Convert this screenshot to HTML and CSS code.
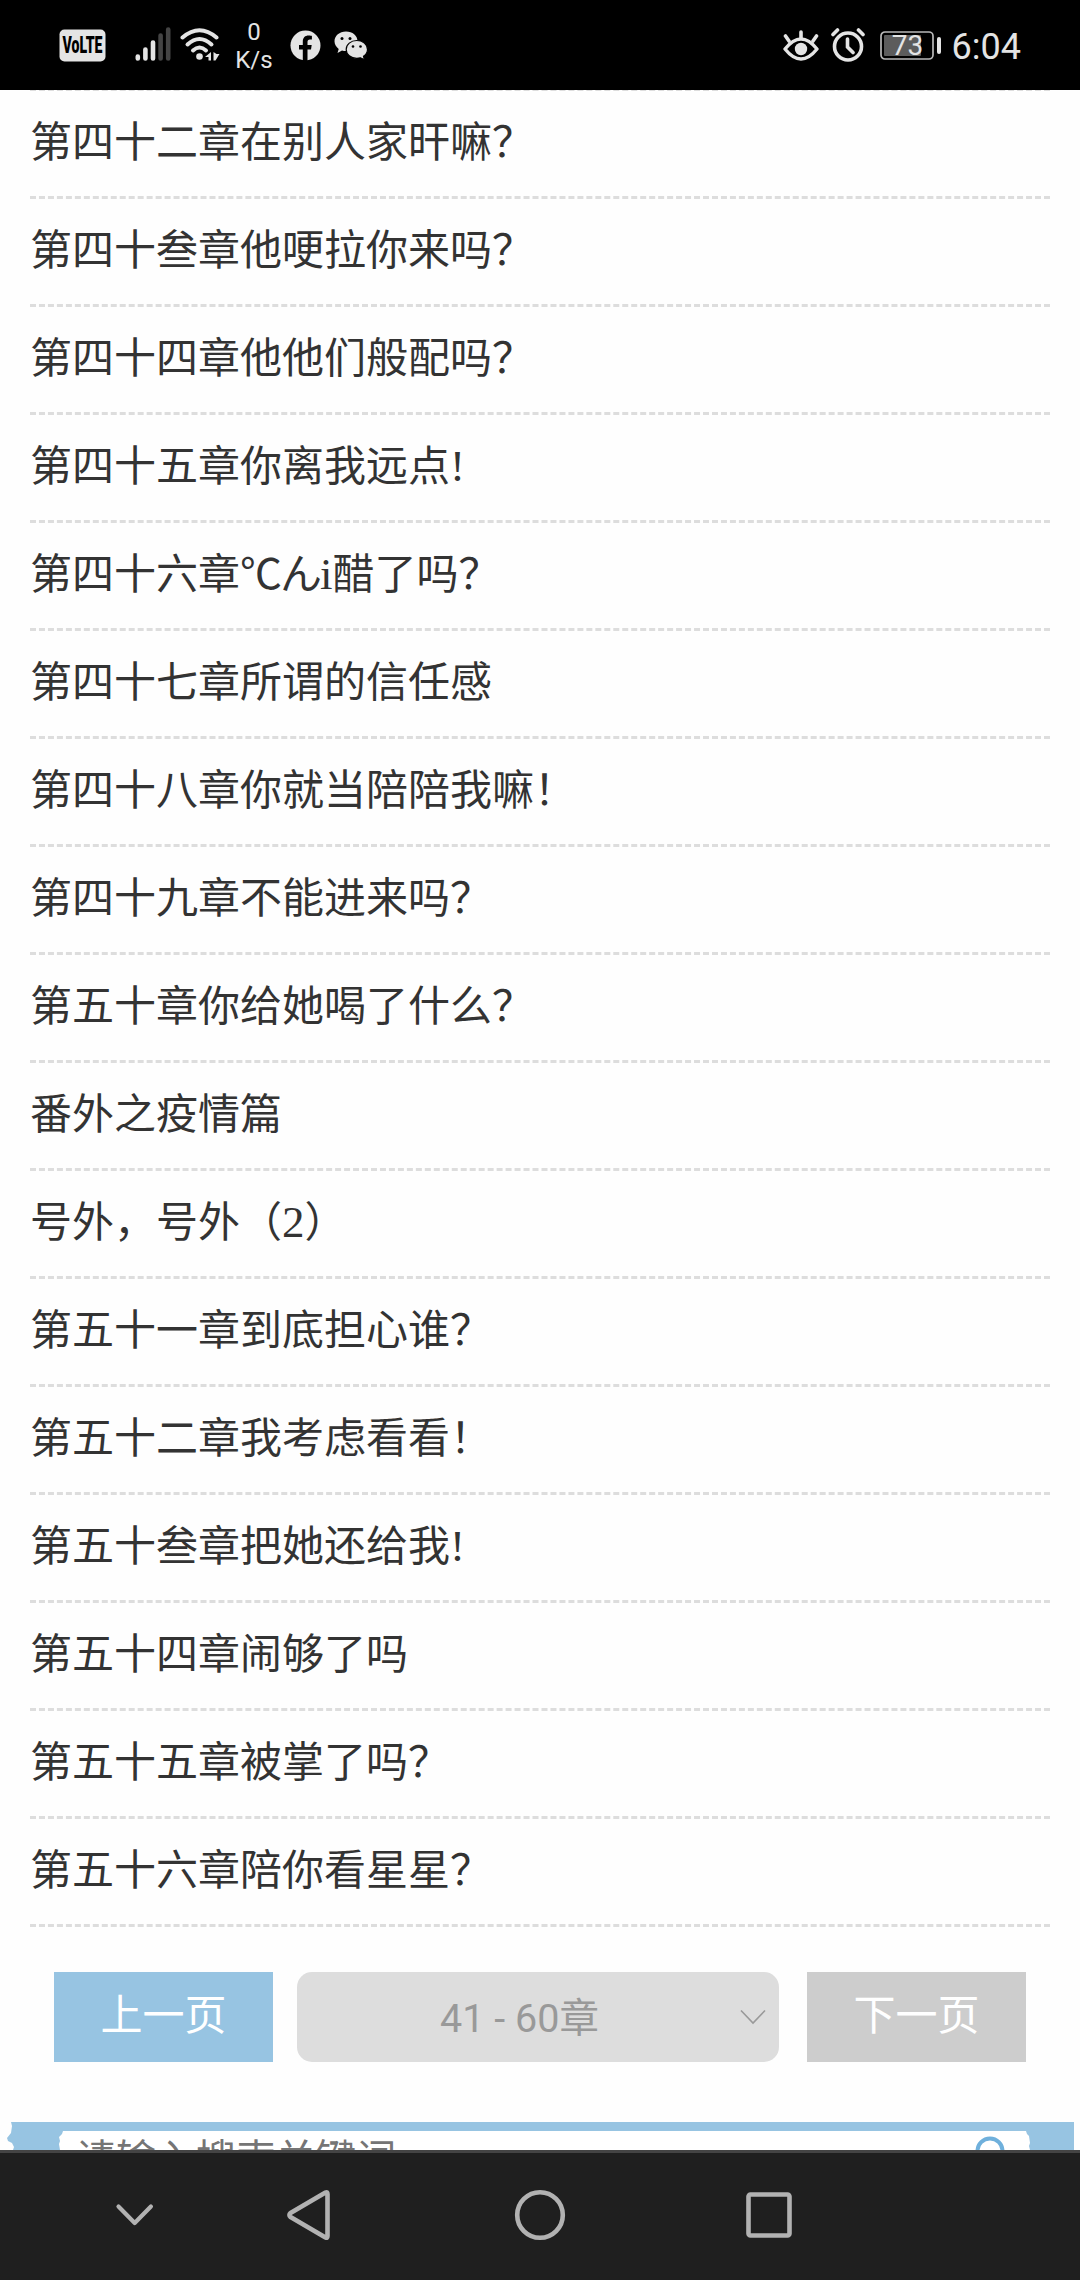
FILE: index.html
```html
<!DOCTYPE html>
<html lang="zh-CN">
<head>
    <meta charset="UTF-8">
    <meta name="viewport" content="width=device-width, initial-scale=1.0">
    <title>章节目录</title>
    <link rel="stylesheet" href="styles.css">
</head>
<body>
    <div class="status-bar">
        <div class="status-left">
            <svg class="volte" width="47" height="33" viewBox="0 0 47 33">
                <rect x="0.5" y="0.5" width="46" height="32" rx="5" fill="#e4e4e4"/>
                <text x="23.5" y="23.5" text-anchor="middle" textLength="40" lengthAdjust="spacingAndGlyphs">VoLTE</text>
            </svg>
            <svg class="signal" width="36" height="34" viewBox="0 0 36 34">
                <g stroke-width="4.6" stroke-linecap="round" stroke="#e4e4e4">
                    <path d="M2.8 29.5v2M10.4 22.5v9M18 15.500v16"/>
                    <path stroke="#444" d="M25.600 8.500v23M33.200 2.500v29"/>
                </g>
            </svg>
            <svg class="wifi" width="40" height="34" viewBox="0 0 40 34">
                <g fill="none" stroke="#e4e4e4" stroke-width="4" stroke-linecap="round">
                    <path d="M2.500 9.500Q19.500-5 36.500 9.500"/>
                    <path d="M7.500 16.500Q19.500 5.500 31.500 16.500"/>
                    <path d="M13 22.500Q19.500 16.500 26 22.500"/>
                </g>
                <circle cx="19.500" cy="28.500" r="3.300" fill="#e4e4e4"/>
                <path fill="#e4e4e4" d="M31 24v8.500h-2.500v-3.500h-3.500zM33.500 24v8.500h2l4-6.500h-3z"/>
            </svg>
            <div class="speed">
                <span>0</span>
                <span>K/s</span>
            </div>
            <svg class="facebook" width="31" height="31" viewBox="0 0 31 31">
                <circle cx="15.500" cy="15.500" r="15" fill="#e4e4e4"/>
                <path d="M12.800 31V19.500H9v-4.400h3.800v-3.500c0-3.900 2.300-6 5.800-6 1.600 0 3.300.300 3.300.300v3.700H20c-1.900 0-2.500 1.200-2.500 2.400v3.100h4.200l-.7 4.400h-3.500V31z"/>
            </svg>
            <svg class="wechat" width="34" height="29" viewBox="0 0 34 29">
                <path fill="#e4e4e4" d="M12 0.500C5.500.500.500 4.800.500 10.300c0 3.200 1.700 5.800 4.200 7.600L3.500 22l4.500-2.500c1.300.400 2.600.600 4 .600C18.500 20.100 23.500 16 23.500 10.300S18.500.500 12 .500z"/>
                <path fill="#e4e4e4" stroke="#000" stroke-width="1.200" d="M22.800 9.500c-6 0-10.600 4-10.600 8.900s4.600 8.900 10.600 8.900c1.300 0 2.500-.200 3.700-.500l4 2-1-3.500c2.400-1.600 4-4.100 4-6.900 0-4.900-4.700-8.900-10.700-8.900z"/>
                <circle cx="8" cy="7.500" r="1.500"/><circle cx="16" cy="7.500" r="1.500"/>
                <circle cx="19" cy="15.500" r="1.300"/><circle cx="26.500" cy="15.500" r="1.300"/>
            </svg>
        </div>
        <div class="status-right">
            <svg class="eye" width="36" height="32" viewBox="0 0 36 32">
                <g fill="none" stroke="#e4e4e4" stroke-width="3.600" stroke-linecap="round">
                    <path d="M2 19Q18-1 34 19 18 39 2 19z" stroke-linejoin="round" stroke-width="3.400"/>
                    <path d="M18 2v6M2.500 6l3.500 5M33.500 6l-3.500 5"/>
                </g>
                <circle cx="18" cy="19" r="6.200" fill="#e4e4e4"/>
            </svg>
            <svg class="alarm" width="34" height="34" viewBox="0 0 34 34">
                <g fill="none" stroke="#e4e4e4" stroke-width="3.600" stroke-linecap="round">
                    <circle cx="17" cy="18.500" r="13.500"/>
                    <path d="M16.500 11v8l5.500 5.500M2 6.500l4.500-4.500M32 6.500l-4.500-4.500"/>
                </g>
            </svg>
            <svg class="battery" width="62" height="30" viewBox="0 0 62 30">
                <rect x="1" y="1" width="52" height="27" rx="4" fill="none" stroke="#b8b8b8" stroke-width="1.700"/>
                <rect x="4" y="4" width="37" height="21" rx="1" fill="#5c5c5c"/>
                <rect x="57" y="6" width="4" height="17" rx="2" fill="#e4e4e4"/>
                <text x="27.500" y="24" text-anchor="middle">73</text>
            </svg>
            <span class="clock">6:04</span>
        </div>
    </div>

    <div class="content">
        <ul class="chapters">
            <li>第四十二章在别人家旰嘛？</li>
            <li>第四十叁章他哽拉你来吗？</li>
            <li>第四十四章他他们般配吗？</li>
            <li>第四十五章你离我远点<span class="latin">!</span></li>
            <li>第四十六章<span class="tight">℃ん</span><span class="latin">i</span>醋了吗？</li>
            <li>第四十七章所谓的信任感</li>
            <li>第四十八章你就当陪陪我嘛！</li>
            <li>第四十九章不能进来吗？</li>
            <li>第五十章你给她喝了什么？</li>
            <li>番外之疫情篇</li>
            <li>号外，号外（<span class="latin">2</span>）</li>
            <li>第五十一章到底担心谁？</li>
            <li>第五十二章我考虑看看！</li>
            <li>第五十叁章把她还给我<span class="latin">!</span></li>
            <li>第五十四章闹够了吗</li>
            <li>第五十五章被掌了吗？</li>
            <li>第五十六章陪你看星星？</li>
        </ul>

        <div class="pager">
            <a class="page-btn">上一页</a>
            <div class="page-select">
                <span>41 - 60章</span>
                <svg width="26" height="16" viewBox="0 0 26 16">
                    <path d="M1 1.500l12 12.500L25 1.500" fill="none" stroke="#999" stroke-width="1.600"/>
                </svg>
            </div>
            <a class="page-btn disabled">下一页</a>
        </div>

        <div class="search">
            <svg class="edge" width="12" height="28" viewBox="0 0 12 28">
                <path fill="#97c4e2" d="M12 0H5l1 4-1 7-4 5 1 3 4 2 2 4-1 3h5z"/>
            </svg>
            <div class="search-inner">
                <svg width="5" height="19" viewBox="0 0 5 19">
                    <path fill="#fff" d="M5 0L4 3 1 6l1 4-1 3 1 6h3z"/>
                </svg>
                <div class="search-box">
                    <span>请输入搜索关键词</span>
                    <svg width="34" height="34" viewBox="0 0 34 34">
                        <circle cx="15" cy="15" r="12.500" fill="none" stroke="#6fb0dc" stroke-width="4"/>
                        <path d="M24 24l8 8" stroke="#6fb0dc" stroke-width="4"/>
                    </svg>
                </div>
                <svg width="5" height="19" viewBox="0 0 5 19">
                    <path fill="#fff" d="M0 0l1 3 2 2 1 7-1 3 1 4H0z"/>
                </svg>
            </div>
        </div>
    </div>

    <div class="nav-bar">
        <svg width="1080" height="127" viewBox="0 0 1080 127">
            <g fill="none" stroke="#b2b2b2" stroke-width="4.600" stroke-linecap="round" stroke-linejoin="round">
                <path d="M118.500 53.500l16.200 16.500 16.200-16.500" stroke-width="4.200"/>
                <path d="M325.500 39.500q2-1 2 1.500v42q0 2.500-2 1.500L290.500 64q-2.200-2 0-4z"/>
                <circle cx="540" cy="62" r="22.800"/>
                <rect x="748.500" y="41.500" width="41" height="41" rx="2"/>
            </g>
        </svg>
    </div>
</body>
</html>
```
FILE: styles.css
```css
* {
    box-sizing: border-box;
}
body {
    margin: 0;
    height: 2280px;
    display: flex;
    flex-direction: column;
    overflow: hidden;
    background: #fefefe;
    color: #333;
    font-family: "Noto Sans CJK SC", sans-serif;
}
svg {
    display: block;
    flex: none;
}

/* status bar */
.status-bar {
    height: 90px;
    flex: none;
    background: #000;
    color: #e4e4e4;
    display: flex;
    justify-content: space-between;
    padding: 0 59px;
    font-family: Roboto, sans-serif;
}
.status-left,
.status-right {
    display: flex;
    align-items: flex-start;
}
.volte {
    margin-top: 29px;
}
.volte text {
    font: 900 23px Roboto, sans-serif;
    fill: #000;
}
.signal {
    margin: 27px 0 0 29px;
}
.wifi {
    margin: 28px 0 0 9px;
}
.speed {
    width: 38px;
    margin: 18px 0 0 15px;
    display: flex;
    flex-direction: column;
    align-items: center;
    font-size: 24px;
    line-height: 28px;
}
.facebook {
    margin: 30px 0 0 17px;
}
.wechat {
    margin: 31px 0 0 13px;
}
.eye {
    margin-top: 30px;
}
.alarm {
    margin: 28px 0 0 12px;
}
.battery {
    margin: 31px 0 0 15px;
}
.battery text {
    font: 28px Roboto, sans-serif;
    fill: #e4e4e4;
}
.clock {
    margin: 25px 0 0 10px;
    font-size: 36px;
    line-height: 44px;
}

/* chapter list */
.content {
    height: 2060px;
    flex: none;
    overflow: hidden;
}
.chapters {
    list-style: none;
    margin: -2px 30px 0;
    padding: 0;
    border-top: 3px dashed #ddd;
}
.chapters li {
    height: 108px;
    border-bottom: 3px dashed #ddd;
    font-size: 42px;
    line-height: 96px;
    white-space: nowrap;
}
.latin {
    font-family: "Liberation Serif", serif;
    font-size: 45px;
    line-height: 1;
}
.tight {
    letter-spacing: -2px;
}

/* pager */
.pager {
    display: flex;
    justify-content: space-between;
    padding: 45px 54px 0;
}
.page-btn {
    width: 219px;
    height: 90px;
    background: #97c4e2;
    color: #fff;
    font-size: 42px;
    line-height: 80px;
    text-align: center;
}
.page-btn.disabled {
    background: #cdcdcd;
}
.page-select {
    width: 482px;
    height: 90px;
    margin-right: 4px;
    padding-right: 13px;
    display: flex;
    align-items: center;
    border-radius: 15px;
    background: #ddd;
    color: #999;
    font-family: Roboto, "Noto Sans CJK SC", sans-serif;
    font-size: 39.500px;
}
.page-select span {
    flex: 1;
    padding: 0 0 6px 2px;
    text-align: center;
}

/* search */
.search {
    display: flex;
    height: 90px;
    margin: 60px 6px 0;
}
.edge {
    margin-right: -1px;
}
.search-inner {
    flex: 1;
    display: flex;
    padding: 9px 43px 0 41px;
    background: #97c4e2;
}
.search-box {
    flex: 1;
    height: 72px;
    padding: 5px 17px 0 13px;
    display: flex;
    justify-content: space-between;
    background: #fff;
    color: #757575;
    font-size: 40px;
    line-height: 40px;
}

/* navigation */
.nav-bar {
    height: 130px;
    flex: none;
    background: #1f1f1f;
    border-top: 3px solid #444;
}
```
